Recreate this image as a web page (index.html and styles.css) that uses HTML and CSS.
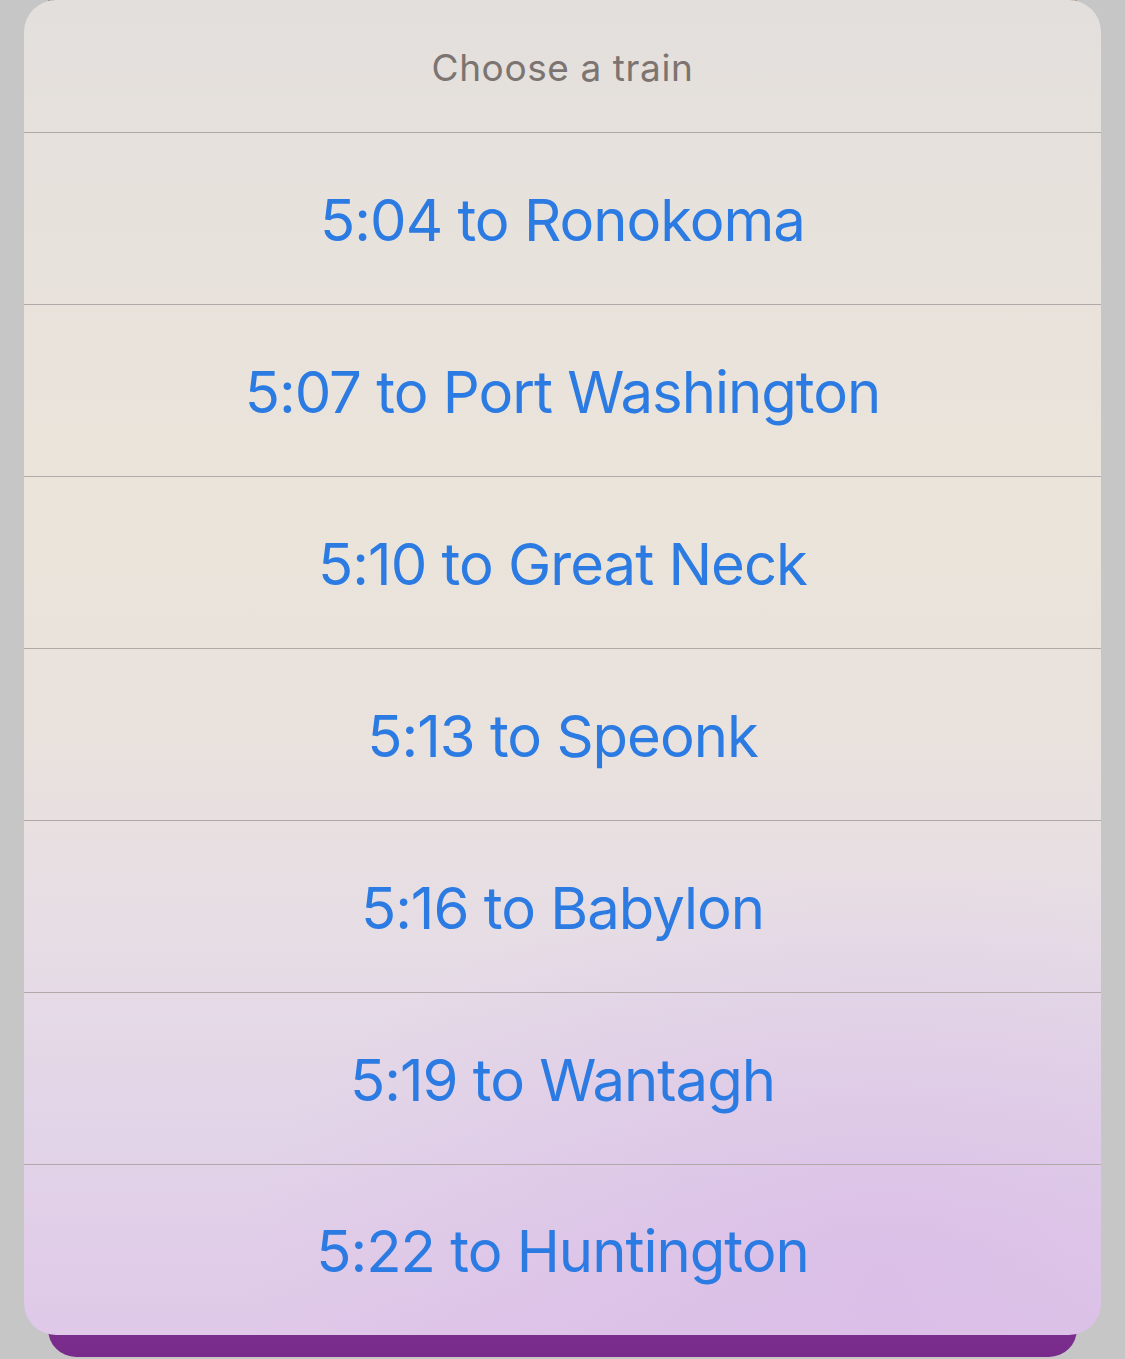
FILE: index.html
```html
<!DOCTYPE html>
<html>
<head>
<meta charset="utf-8">
<link rel="stylesheet" href="styles.css">
</head>
<body>
<div class="stage">
  <div class="under"></div>
  <div class="sheet">
    <div class="title">Choose a train</div>
    <div class="option">5:04 to Ronokoma</div>
    <div class="option">5:07 to Port Washington</div>
    <div class="option">5:10 to Great Neck</div>
    <div class="option">5:13 to Speonk</div>
    <div class="option">5:16 to Babylon</div>
    <div class="option">5:19 to Wantagh</div>
    <div class="option last">5:22 to Huntington</div>
  </div>
</div>
</body>
</html>
```
FILE: styles.css
```css
html, body {
  margin: 0;
  padding: 0;
  background: #c6c6c6;
}
body {
  width: 1125px;
  height: 1359px;
  overflow: hidden;
  font-family: Inter, "Noto Sans", sans-serif;
}
.stage {
  position: relative;
  width: 1125px;
  height: 1359px;
}
.under {
  position: absolute;
  left: 48px;
  top: 0;
  width: 1029px;
  height: 1357px;
  border-radius: 0 0 28px 28px;
  background: linear-gradient(#9e8b79 0%, #8a5a80 60%, #792b8c 100%);
}
.sheet {
  position: relative;
  margin-left: 24px;
  width: 1077px;
  height: 1335px;
  border-radius: 32px;
  overflow: hidden;
  display: flex;
  flex-direction: column;
  background:
    radial-gradient(ellipse 60% 30% at 80% 95%, rgba(214,180,230,0.55), rgba(214,180,230,0) 100%),
    linear-gradient(180deg, #e3dfdc 0%, #e8e2dc 20%, #ebe4da 38%, #e9e2dd 55%, #e6dde5 70%, #e2d4e8 85%, #dfc8e8 100%);
}
.title {
  height: 133px;
  flex: none;
  display: flex;
  align-items: center;
  justify-content: center;
  font-size: 37px;
  color: #7c7471;
  letter-spacing: 0.6px;
  border-bottom: 1px solid #aea8a5;
  box-sizing: border-box;
  padding-top: 3px;
}
.option {
  height: 172px;
  flex: none;
  display: flex;
  align-items: center;
  justify-content: center;
  font-size: 58px;
  color: #2b7be3;
  letter-spacing: -1px;
  border-bottom: 1px solid #b0a9a8;
  box-sizing: border-box;
  padding-top: 2px;
}
.option.last {
  border-bottom: none;
  flex: 1;
}
```
